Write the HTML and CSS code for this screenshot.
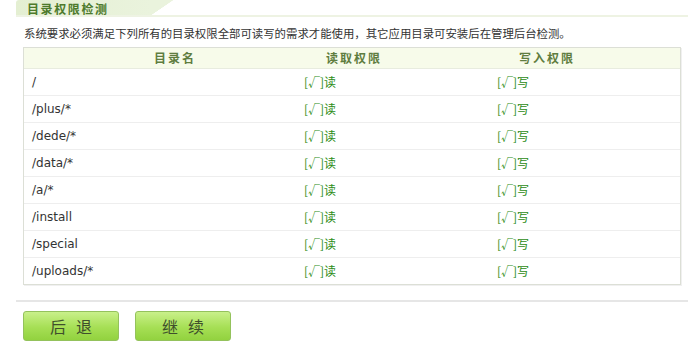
FILE: index.html
```
<html>
    <head>
        <meta charset="utf-8">
        <link rel="stylesheet" href="styles.css">
    </head>
    <body>
        <div class="main">
            <div class="tab-bar">
                <div class="tab">目录权限检测</div>
            </div>
            <p class="desc">系统要求必须满足下列所有的目录权限全部可读写的需求才能使用，其它应用目录可安装后在管理后台检测。</p>

            <div class="dir-table">
                <div class="head">
                    <div class="th th-name">目录名</div>
                    <div class="th">读取权限</div>
                    <div class="th">写入权限</div>
                </div>
                <div class="row"><div class="td">/</div><div class="td ok">[√]读</div><div class="td ok">[√]写</div></div>
                <div class="row"><div class="td">/plus/*</div><div class="td ok">[√]读</div><div class="td ok">[√]写</div></div>
                <div class="row"><div class="td">/dede/*</div><div class="td ok">[√]读</div><div class="td ok">[√]写</div></div>
                <div class="row"><div class="td">/data/*</div><div class="td ok">[√]读</div><div class="td ok">[√]写</div></div>
                <div class="row"><div class="td">/a/*</div><div class="td ok">[√]读</div><div class="td ok">[√]写</div></div>
                <div class="row"><div class="td">/install</div><div class="td ok">[√]读</div><div class="td ok">[√]写</div></div>
                <div class="row"><div class="td">/special</div><div class="td ok">[√]读</div><div class="td ok">[√]写</div></div>
                <div class="row last"><div class="td">/uploads/*</div><div class="td ok">[√]读</div><div class="td ok">[√]写</div></div>
            </div>

            <div class="sep"></div>

            <div class="buttons">
                <input class="btn" type="button" value="后退">
                <input class="btn" type="button" value="继续">
            </div>
        </div>
    </body>
</html>
```

FILE: styles.css
```
body {
    margin: 0;
    background-color: white;
    color: #333;
    font-family: "Noto Sans CJK SC", "DejaVu Sans", sans-serif;
    font-size: 12px;
}

.main {
    width: 672px;
    margin-left: 16px;
}

.tab-bar {
    height: 15px;
    border-bottom: 2px solid #eef3e3;
}

.tab {
    position: relative;
    width: 124px;
    height: 15px;
    padding-left: 11px;

    background: linear-gradient(to right, #e4efd2, #eaf3dd);
    border-top-left-radius: 3px;

    color: #4d7a2c;
    font-weight: bold;
    font-size: 12px;
    line-height: 17px;
    letter-spacing: 1.6px;
}

.tab:after {
    content: "";
    position: absolute;
    top: 0;
    right: -22px;
    width: 22px;
    height: 15px;
    background: linear-gradient(to bottom right, #eaf3dd 50%, rgba(255,255,255,0) 52%);
}

.desc {
    margin: 0;
    padding: 5px 8px 0 8px;
    height: 25px;
    line-height: 22px;
    font-size: 11.4px;
    color: #333;
}

.dir-table {
    margin: 0 7px;
    border: 1px solid #dcdfd6;
    box-shadow: 1px 1px 0 #f0f0f0;
}

.head,
.row {
    display: grid;
    grid-template-columns: 272px 193px 1fr;
}

.head {
    height: 20px;
    background-color: #f7fbea;
    border-bottom: 1px solid #e8ecdf;
}

.th {
    padding-left: 30px;
    line-height: 20px;
    font-weight: bold;
    color: #5f7d40;
    letter-spacing: 2px;
}

.th-name {
    padding-left: 130px;
}

.row {
    height: 26px;
    border-bottom: 1px solid #eeeeee;
}

.row.last {
    border-bottom: none;
}

.td {
    padding-left: 8px;
    line-height: 26px;
    font-family: "DejaVu Sans", "Noto Sans CJK SC", sans-serif;
    font-size: 12px;
    color: #333;
}

.ok {
    font-family: "Noto Sans CJK SC", sans-serif;
    color: #2c8c14;
}

.sep {
    margin-top: 15px;
    border-top: 2px solid #e6e6e6;
}

.buttons {
    display: flex;
    gap: 16px;
    padding: 9px 7px 0 7px;
}

.btn {
    width: 96px;
    height: 30px;
    padding: 0;
    padding-left: 10px;

    border: 1px solid #94c25c;
    border-radius: 3px;
    outline: none;
    background: linear-gradient(to bottom, #c9f08a, #a6df55 55%, #92d23f);

    color: #3f4f2c;
    font-family: "Noto Sans CJK SC", sans-serif;
    font-size: 16px;
    letter-spacing: 10px;
    text-align: center;
}

.btn:hover {
    cursor: pointer;
}
```
